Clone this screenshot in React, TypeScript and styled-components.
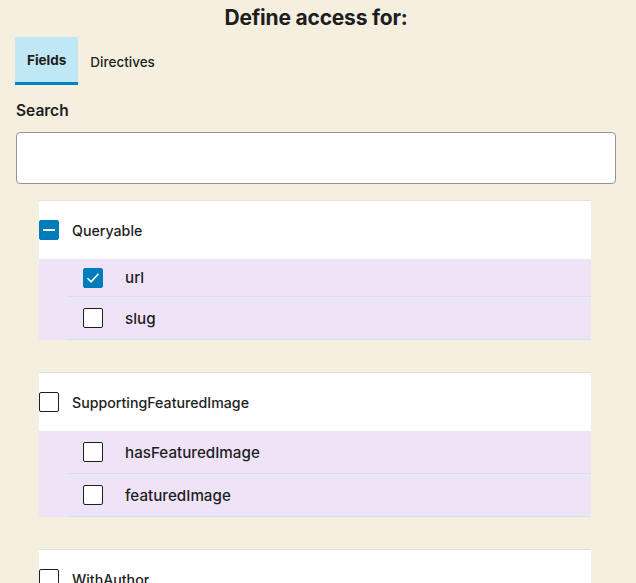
import React from "react";
import styled, { createGlobalStyle } from "styled-components";

const GlobalStyle = createGlobalStyle`
  html, body { margin: 0; padding: 0; }
  body {
    background: #f5efe0;
    font-family: Inter, "Noto Sans", sans-serif;
    color: #1e1e1e;
  }
`;

const Page = styled.div`
  padding: 0 20px 0 16px;
`;

const Title = styled.h2`
  margin: 0;
  padding-top: 5px;
  height: 32px;
  font-size: 21px;
  font-weight: 700;
  line-height: 26px;
  text-align: center;
  letter-spacing: -0.2px;
`;

const TabBar = styled.div`
  display: flex;
  margin-left: -1px;
`;

const Tab = styled.button<{ $active?: boolean }>`
  all: unset;
  box-sizing: border-box;
  height: 48px;
  padding: 0 12px;
  display: flex;
  align-items: center;
  font-family: Inter, sans-serif;
  font-size: 13.5px;
  font-weight: ${(p) => (p.$active ? 700 : 500)};
  color: #1e1e1e;
  border-radius: 2px 2px 0 0;
  background: ${(p) => (p.$active ? "#bfe7f4" : "transparent")};
  border-bottom: 3px solid ${(p) => (p.$active ? "#0085c2" : "transparent")};
  padding-top: ${(p) => (p.$active ? "0px" : "4px")};
`;

const Label = styled.label`
  display: block;
  margin-top: 16px;
  font-size: 15.5px;
  font-weight: 600;
  line-height: 20px;
`;

const SearchInput = styled.input`
  display: block;
  box-sizing: border-box;
  width: 100%;
  height: 52px;
  margin-top: 11px;
  border: 1px solid #949494;
  border-radius: 4px;
  background: #fff;
  outline: none;
`;

const GroupList = styled.div`
  margin: 16px 25px 0 23px;
  display: flex;
  flex-direction: column;
  gap: 32px;
`;

const Card = styled.div`
  background: #fff;
  border-top: 1px solid #e4e2de;
`;

const CardHeader = styled.div`
  height: 58px;
  display: flex;
  align-items: center;
  gap: 13px;
  font-size: 14.2px;
  font-weight: 500;
`;

const Items = styled.ul`
  list-style: none;
  margin: 0;
  padding: 0;
  background: #efe3f8;
`;

const Item = styled.li<{ $h?: number }>`
  margin-left: 28px;
  height: ${(p) => p.$h ?? 42}px;
  border-bottom: 1px solid #e3dbe9;
  display: flex;
  align-items: center;
  gap: 22px;
  padding-left: 16px;
  font-size: 15.2px;
  font-weight: 500;
`;

const Box = styled.span<{ $on?: boolean }>`
  box-sizing: border-box;
  width: 20px;
  height: 20px;
  flex: none;
  border-radius: 2px;
  border: 1.5px solid ${(p) => (p.$on ? "#007cba" : "#1e1e1e")};
  background: ${(p) => (p.$on ? "#007cba" : "#fff")};
  display: flex;
  align-items: center;
  justify-content: center;
`;

type State = "on" | "off" | "mixed";

const Checkbox = ({ state }: { state: State }) => (
  <Box $on={state !== "off"}>
    {state === "on" && (
      <svg width="18" height="18" viewBox="0 0 18 18" fill="none">
        <path d="M3.5 9.2l3.6 3.6 7.4-8" stroke="#fff" strokeWidth="1.6" />
      </svg>
    )}
    {state === "mixed" && (
      <svg width="18" height="18" viewBox="0 0 18 18" fill="none">
        <path d="M3 9h12" stroke="#fff" strokeWidth="2" />
      </svg>
    )}
  </Box>
);

const groups: { name: string; state: State; items: { name: string; on: boolean }[] }[] = [
  { name: "Queryable", state: "mixed", items: [{ name: "url", on: true }, { name: "slug", on: false }] },
  {
    name: "SupportingFeaturedImage",
    state: "off",
    items: [
      { name: "hasFeaturedImage", on: false },
      { name: "featuredImage", on: false },
    ],
  },
  { name: "WithAuthor", state: "off", items: [{ name: "author", on: false }] },
];

export default function App() {
  return (
    <Page>
      <GlobalStyle />
      <Title>Define access for:</Title>
      <TabBar>
        <Tab $active>Fields</Tab>
        <Tab>Directives</Tab>
      </TabBar>
      <Label>Search</Label>
      <SearchInput type="text" />
      <GroupList>
        {groups.map((g, gi) => (
          <Card key={g.name}>
            <CardHeader>
              <Checkbox state={g.state} />
              {g.name}
            </CardHeader>
            <Items>
              {g.items.map((it, ii) => (
                <Item key={it.name} $h={gi === 0 && ii === 0 ? 37 : 42}>
                  <Checkbox state={it.on ? "on" : "off"} />
                  {it.name}
                </Item>
              ))}
            </Items>
          </Card>
        ))}
      </GroupList>
    </Page>
  );
}
